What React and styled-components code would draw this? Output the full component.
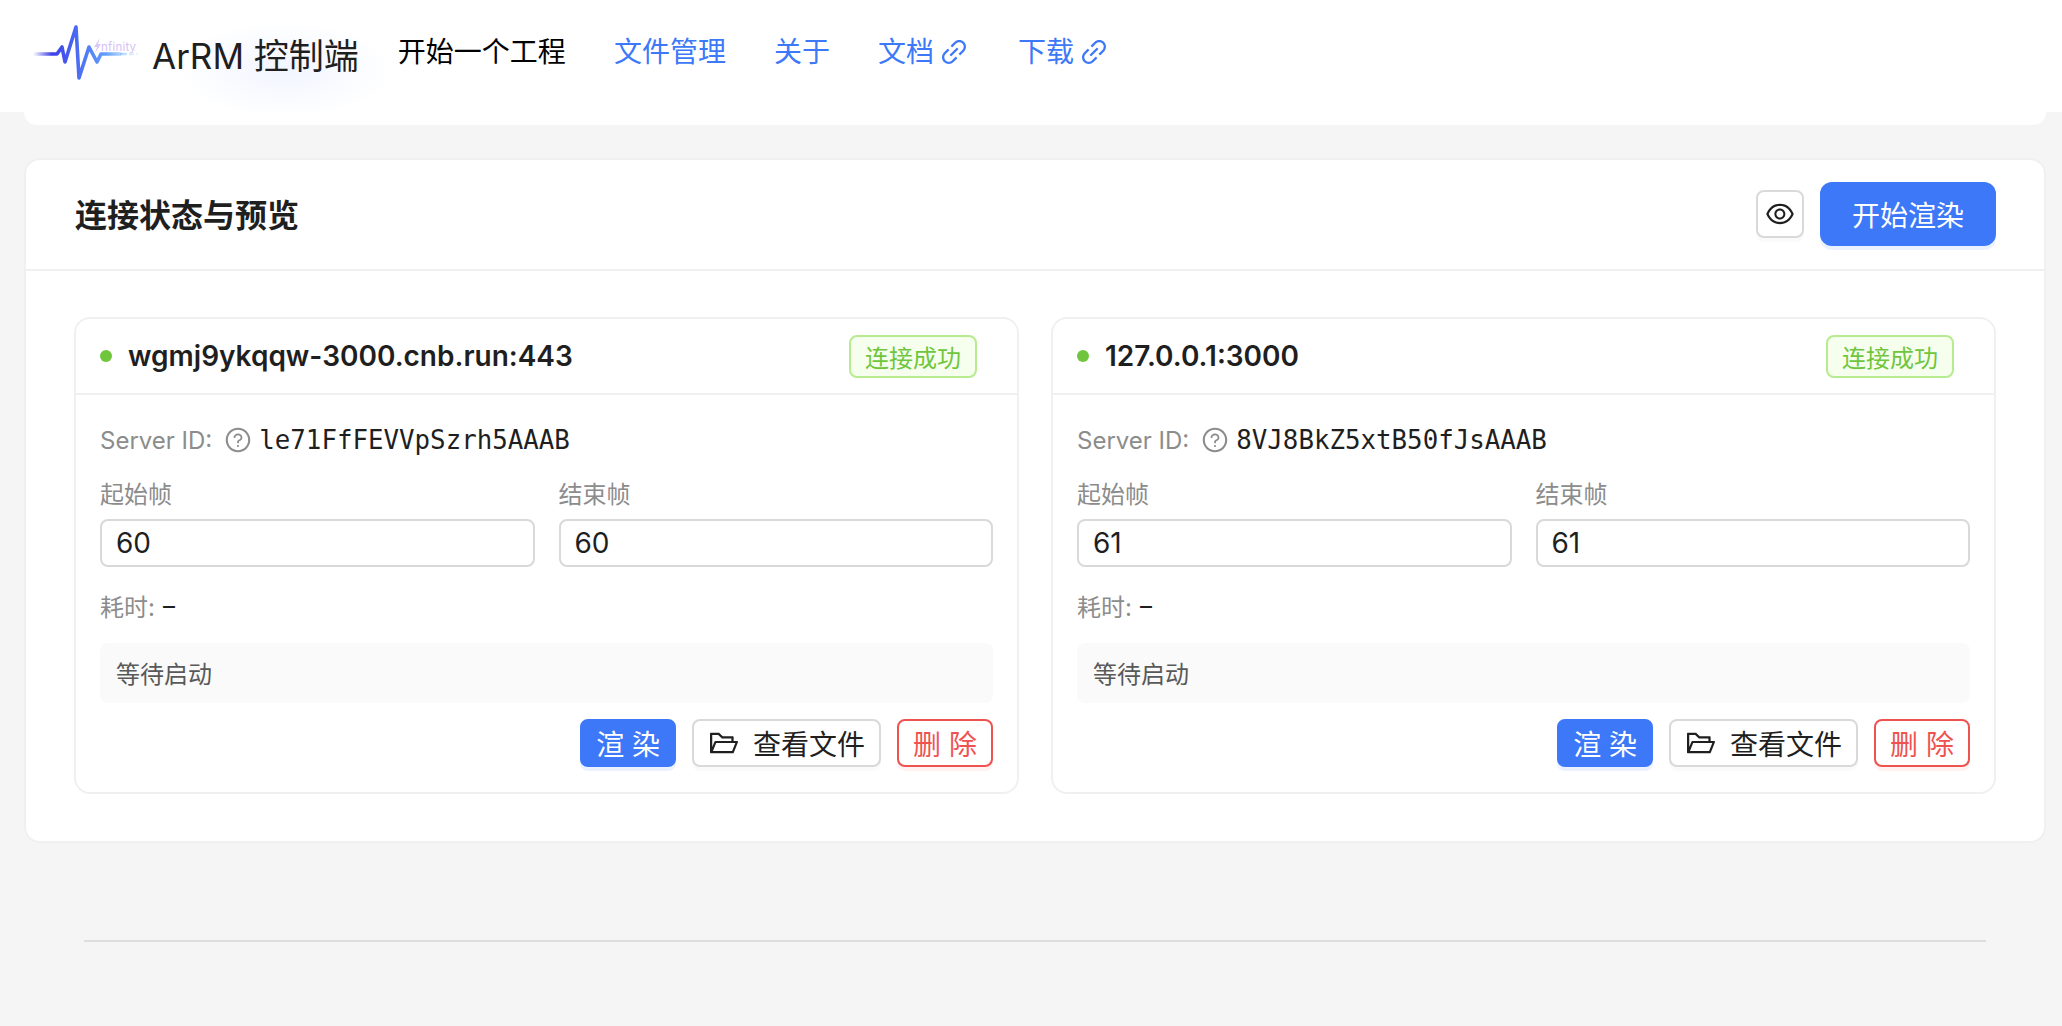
import React from 'react';
import styled, { createGlobalStyle } from 'styled-components';
import { AiOutlineEye, AiOutlineFolderOpen, AiOutlineLink, AiOutlineQuestionCircle } from 'react-icons/ai';

const GlobalStyle = createGlobalStyle`
    html, body {
        margin: 0;
        background: #f5f5f5;
        font-family: Inter, "Noto Sans CJK SC", sans-serif;
        color: #1f1f1f;
    }
    * {
        box-sizing: border-box;
    }
`;

const Header = styled.header`
    height: 112px;
    padding-left: 30px;
    display: flex;
    align-items: center;
    background: radial-gradient(ellipse 108px 48px at 285px 70px, #f1f5ff, rgba(241, 245, 255, 0)) #fff;
`;

const Logo = styled.svg`
    width: 110px;
    height: 60px;
    margin-top: -4px;
    flex: none;
`;

const Title = styled.h1`
    margin: 0 39px 0 12px;
    font-size: 35px;
    line-height: 44px;
    font-weight: 400;
    color: #1f1f1f;
    white-space: nowrap;
`;

const Nav = styled.nav`
    display: flex;
    align-items: center;
    gap: 48px;
    margin-top: -8px;
`;

const NavItem = styled.a`
    display: flex;
    align-items: center;
    gap: 4px;
    font-size: 28px;
    line-height: 40px;
    color: ${props => (props.$active ? '#000' : '#3c78f8')};
    svg {
        font-size: 32px;
    }
`;

const TopCard = styled.div`
    height: 13px;
    margin: 0 16px 33px 24px;
    background: #fff;
    border-radius: 0 0 16px 16px;
`;

const Card = styled.section`
    margin: 0 16px 0 24px;
    background: #fff;
    border: 2px solid #f0f0f0;
    border-radius: 16px;
`;

const CardHead = styled.div`
    height: 111px;
    padding: 0 48px 2px 49px;
    display: flex;
    align-items: center;
    justify-content: space-between;
    border-bottom: 2px solid #f0f0f0;
`;

const CardTitle = styled.h2`
    margin: 0 0 2px;
    font-size: 32px;
    font-weight: 600;
    color: #1f1f1f;
`;

const CardActions = styled.div`
    display: flex;
    align-items: center;
    gap: 16px;
`;

const EyeButton = styled.button`
    width: 48px;
    height: 48px;
    padding: 0;
    display: flex;
    align-items: center;
    justify-content: center;
    background: #fff;
    border: 2px solid #d9d9d9;
    border-radius: 8px;
    box-shadow: 0 4px 0 rgba(0, 0, 0, 0.02);
    font-size: 32px;
    color: #1f1f1f;
`;

const StartButton = styled.button`
    width: 176px;
    height: 64px;
    padding: 0;
    background: #3c78f8;
    border: none;
    border-radius: 12px;
    box-shadow: 0 4px 0 rgba(60, 120, 248, 0.1);
    font-family: inherit;
    font-size: 28px;
    color: #fff;
`;

const CardBody = styled.div`
    padding: 46px 48px 47px;
    display: grid;
    grid-template-columns: 1fr 1fr;
    gap: 32px;
`;

const Block = styled.article`
    height: 477px;
    border: 2px solid #f0f0f0;
    border-radius: 16px;
`;

const BlockHead = styled.div`
    height: 76px;
    padding: 0 40px 0 24px;
    display: flex;
    align-items: center;
    border-bottom: 2px solid #f0f0f0;
`;

const Dot = styled.span`
    width: 12px;
    height: 12px;
    margin-right: 16px;
    border-radius: 50%;
    background: #6fc63c;
`;

const Host = styled.span`
    flex: 1;
    font-size: 28px;
    font-weight: 600;
    color: #1f1f1f;
`;

const Tag = styled.span`
    width: 128px;
    height: 43px;
    display: flex;
    align-items: center;
    justify-content: center;
    background: #f6ffed;
    border: 2px solid #b7eb8f;
    border-radius: 8px;
    font-size: 24px;
    color: #6fc63c;
`;

const BlockBody = styled.div`
    padding: 25px 24px 0;
`;

const ServerRow = styled.div`
    height: 40px;
    display: flex;
    align-items: center;
    font-size: 24px;
    color: #8c8c8c;
`;

const HelpIcon = styled(AiOutlineQuestionCircle)`
    margin: 0 7px 0 12px;
    font-size: 28px;
    color: #8c8c8c;
`;

const ServerId = styled.span`
    font-family: "DejaVu Sans Mono", monospace;
    font-size: 25.8px;
    color: #1f1f1f;
`;

const Fields = styled.div`
    margin-top: 15px;
    display: grid;
    grid-template-columns: 1fr 1fr;
    gap: 24px;
`;

const FieldLabel = styled.label`
    display: block;
    height: 40px;
    font-size: 24px;
    line-height: 40px;
    color: #8c8c8c;
`;

const Input = styled.input`
    display: block;
    width: 100%;
    height: 48px;
    margin-top: 4px;
    padding: 0 14px;
    background: #fff;
    border: 2px solid #d9d9d9;
    border-radius: 8px;
    font-family: inherit;
    font-size: 28px;
    color: #1f1f1f;
`;

const Elapsed = styled.div`
    margin-top: 18px;
    height: 40px;
    display: flex;
    align-items: center;
    gap: 8px;
    font-size: 24px;
    color: #8c8c8c;
    b {
        font-weight: 400;
        color: #1f1f1f;
    }
`;

const StatusBox = styled.div`
    margin-top: 18px;
    height: 60px;
    padding: 0 16px 2px;
    display: flex;
    align-items: center;
    background: #fafafa;
    border-radius: 8px;
    font-size: 24px;
    color: #595959;
`;

const Actions = styled.div`
    margin-top: 16px;
    display: flex;
    justify-content: flex-end;
    gap: 16px;
`;

const ActionButton = styled.button`
    height: 48px;
    padding: 0 14px;
    display: flex;
    align-items: center;
    gap: 13px;
    background: ${props => (props.$variant === 'primary' ? '#3c78f8' : '#fff')};
    border: 2px solid ${props => ({ primary: '#3c78f8', danger: '#ee5350' }[props.$variant] || '#d9d9d9')};
    border-radius: 8px;
    box-shadow: 0 4px 0 ${props => ({ primary: 'rgba(60, 120, 248, 0.1)', danger: 'rgba(255, 38, 5, 0.06)' }[props.$variant] || 'rgba(0, 0, 0, 0.02)')};
    font-family: inherit;
    font-size: 28px;
    white-space: nowrap;
    color: ${props => ({ primary: '#fff', danger: '#ee5350' }[props.$variant] || '#1f1f1f')};
    svg {
        font-size: 32px;
    }
`;

const Divider = styled.hr`
    margin: 97px 76px 0 84px;
    border: none;
    border-top: 2px solid #dedede;
`;

const PulseLogo = () => (
    <Logo viewBox="0 0 110 60">
        <defs>
            <linearGradient id="pulse" gradientUnits="userSpaceOnUse" x1="3" y1="0" x2="108" y2="0">
                <stop offset="0" stopColor="#3a3ae6" stopOpacity="0" />
                <stop offset="0.18" stopColor="#3d3fe8" />
                <stop offset="0.45" stopColor="#4d70f5" />
                <stop offset="0.7" stopColor="#62a0fa" />
                <stop offset="1" stopColor="#a8d8ff" stopOpacity="0.2" />
            </linearGradient>
        </defs>
        <path d="M3 30H27L32 23L35 38L46 3L49 54L59 23L67 38L71 30H90" fill="none" stroke="url(#pulse)" strokeWidth="3.6" strokeLinejoin="round" strokeLinecap="round" />
        <path d="M90 30H108" fill="none" stroke="url(#pulse)" strokeWidth="2.4" strokeDasharray="7 2 5 2" />
        <path d="M70 14L64 23H67L65 29L71 20H68Z" fill="#dcc8f8" />
        <text x="71" y="27" fontFamily="Inter, sans-serif" fontSize="11.5" letterSpacing="0.2" fill="#d6c2f5">nfinity</text>
    </Logo>
);

const servers = [
    { host: 'wgmj9ykqqw-3000.cnb.run:443', id: 'le71FfFEVVpSzrh5AAAB', frame: '60' },
    { host: '127.0.0.1:3000', id: '8VJ8BkZ5xtB50fJsAAAB', frame: '61' },
];

const ServerBlock = ({ host, id, frame }) => (
    <Block>
        <BlockHead>
            <Dot />
            <Host>{host}</Host>
            <Tag>连接成功</Tag>
        </BlockHead>
        <BlockBody>
            <ServerRow>
                Server ID:
                <HelpIcon />
                <ServerId>{id}</ServerId>
            </ServerRow>
            <Fields>
                <div>
                    <FieldLabel>起始帧</FieldLabel>
                    <Input defaultValue={frame} />
                </div>
                <div>
                    <FieldLabel>结束帧</FieldLabel>
                    <Input defaultValue={frame} />
                </div>
            </Fields>
            <Elapsed>耗时: <b>–</b></Elapsed>
            <StatusBox>等待启动</StatusBox>
            <Actions>
                <ActionButton $variant="primary">渲 染</ActionButton>
                <ActionButton $variant="files"><AiOutlineFolderOpen />查看文件</ActionButton>
                <ActionButton $variant="danger">删 除</ActionButton>
            </Actions>
        </BlockBody>
    </Block>
);

const App = () => (
    <>
        <GlobalStyle />
        <Header>
            <PulseLogo />
            <Title>ArRM 控制端</Title>
            <Nav>
                <NavItem $active>开始一个工程</NavItem>
                <NavItem>文件管理</NavItem>
                <NavItem>关于</NavItem>
                <NavItem>文档<AiOutlineLink /></NavItem>
                <NavItem>下载<AiOutlineLink /></NavItem>
            </Nav>
        </Header>
        <TopCard />
        <Card>
            <CardHead>
                <CardTitle>连接状态与预览</CardTitle>
                <CardActions>
                    <EyeButton><AiOutlineEye /></EyeButton>
                    <StartButton>开始渲染</StartButton>
                </CardActions>
            </CardHead>
            <CardBody>
                {servers.map(server => <ServerBlock key={server.id} {...server} />)}
            </CardBody>
        </Card>
        <Divider />
    </>
);

export default App;
